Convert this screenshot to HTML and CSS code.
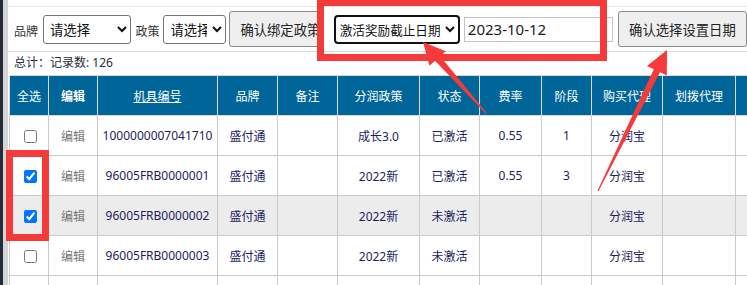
FILE: index.html
```html
<!DOCTYPE html>
<html lang="zh-CN">

<head>
  <meta charset="UTF-8">
  <title>机具管理</title>
  <link rel="stylesheet" href="styles.css">
</head>

<body>
  <div class="page">
    <div class="main">
      <!-- 工具栏 -->
      <div class="toolbar">
        <span class="lbl">品牌</span>
        <select class="sel sel-brand">
          <option>请选择</option>
        </select>
        <span class="lbl lbl-gap">政策</span>
        <select class="sel sel-policy">
          <option>请选择</option>
        </select>
        <button class="btn btn-bind">确认绑定政策</button>
        <select class="sel sel-date">
          <option>激活奖励截止日期</option>
        </select>
        <input class="date-input" type="text" value="2023-10-12">
        <button class="btn btn-date">确认选择设置日期</button>
      </div>

      <div class="summary">总计：记录数: 126</div>

      <!-- 列表 -->
      <div class="grid-wrap">
        <table class="grid">
          <colgroup>
            <col style="width:39px">
            <col style="width:49px">
            <col style="width:120px">
            <col style="width:60px">
            <col style="width:60px">
            <col style="width:82px">
            <col style="width:60px">
            <col style="width:62px">
            <col style="width:50px">
            <col style="width:71px">
            <col style="width:73px">
            <col style="width:90px">
          </colgroup>
          <thead>
            <tr>
              <th>全选</th>
              <th class="th-bold">编辑</th>
              <th><a href="#" class="th-link">机具编号</a></th>
              <th>品牌</th>
              <th>备注</th>
              <th>分润政策</th>
              <th>状态</th>
              <th>费率</th>
              <th>阶段</th>
              <th>购买代理</th>
              <th>划拨代理</th>
              <th></th>
            </tr>
          </thead>
          <tbody>
            <tr>
              <td><input type="checkbox" class="chk"></td>
              <td><a href="#" class="edit">编辑</a></td>
              <td>1000000007041710</td>
              <td>盛付通</td>
              <td></td>
              <td>成长3.0</td>
              <td>已激活</td>
              <td>0.55</td>
              <td>1</td>
              <td>分润宝</td>
              <td></td>
              <td></td>
            </tr>
            <tr>
              <td><input type="checkbox" class="chk" checked></td>
              <td><a href="#" class="edit">编辑</a></td>
              <td>96005FRB0000001</td>
              <td>盛付通</td>
              <td></td>
              <td>2022新</td>
              <td>已激活</td>
              <td>0.55</td>
              <td>3</td>
              <td>分润宝</td>
              <td></td>
              <td></td>
            </tr>
            <tr class="is-hover">
              <td><input type="checkbox" class="chk" checked></td>
              <td><a href="#" class="edit">编辑</a></td>
              <td>96005FRB0000002</td>
              <td>盛付通</td>
              <td></td>
              <td>2022新</td>
              <td>未激活</td>
              <td></td>
              <td></td>
              <td>分润宝</td>
              <td></td>
              <td></td>
            </tr>
            <tr>
              <td><input type="checkbox" class="chk"></td>
              <td><a href="#" class="edit">编辑</a></td>
              <td>96005FRB0000003</td>
              <td>盛付通</td>
              <td></td>
              <td>2022新</td>
              <td>未激活</td>
              <td></td>
              <td></td>
              <td>分润宝</td>
              <td></td>
              <td></td>
            </tr>
            <tr>
              <td></td>
              <td></td>
              <td></td>
              <td></td>
              <td></td>
              <td></td>
              <td></td>
              <td></td>
              <td></td>
              <td></td>
              <td></td>
              <td></td>
            </tr>
          </tbody>
        </table>
      </div>
    </div>
  </div>

  <!-- 标注 -->
  <div class="mark mark-date"></div>
  <div class="mark mark-check"></div>
  <svg class="arrows" width="747" height="285" viewBox="0 0 747 285">
    <polygon points="486.4,112.6 440.2,56.2 445.8,51.2 423,42 429.4,65.8 435,60.8 485.6,113.4" />
    <polygon points="598.5,191.3 660,72.2 666.8,75.5 667,50 647,65.9 653.8,69.2 597.5,190.7" />
  </svg>
</body>

</html>
```

FILE: styles.css
```css
html,
body {
  margin: 0;
  padding: 0;
  background: #fff;
  overflow: hidden;
}

body {
  width: 747px;
  height: 285px;
  position: relative;
  font-family: "Noto Sans", "Noto Sans CJK SC", sans-serif;
  font-size: 12px;
  color: #333;
}

.page {
  border-left: 3px solid #262b38;
  height: 285px;
  overflow: hidden;
}

.main {
  border-left: 5px solid #d5d5d5;
  height: 285px;
  padding-top: 6px;
  box-sizing: border-box;
  overflow: hidden;
}

/* 工具栏 */
.toolbar {
  display: flex;
  align-items: center;
  height: 44px;
  padding-left: 6px;
  border-top: 1px solid #e6e6e6;
  border-bottom: 1px solid #dcdcdc;
  white-space: nowrap;
  overflow: hidden;
}

.lbl {
  font-size: 12px;
  color: #333;
  margin-right: 5px;
  padding-top: 4px;
}

.lbl-gap {
  margin-left: 4px;
  margin-right: 4px;
}

.sel {
  height: 29px;
  font-family: "Noto Sans CJK SC", sans-serif;
  font-size: 13.33px;
  color: #111;
  background: #fff;
  border: 1px solid #767676;
  border-radius: 3px;
  padding: 0 2px;
  box-sizing: border-box;
}

.sel-brand {
  width: 89px;
}

.sel-policy {
  width: 63px;
}

.sel-date {
  width: 127px;
  margin-left: 12px;
  border: 2px solid #111;
  border-radius: 4px;
  padding: 0;
  font-size: 12.6px;
}

.btn {
  height: 36px;
  font-family: "Noto Sans CJK SC", sans-serif;
  font-size: 13.33px;
  color: #222;
  background: #efefef;
  border: 1px solid #8a8a8a;
  border-radius: 3px;
  box-sizing: border-box;
  white-space: nowrap;
}

.btn-bind {
  width: 93px;
  margin-left: 3px;
  padding: 0 0 0 10px;
  text-align: left;
  overflow: hidden;
}

.btn-date {
  width: 130px;
  margin-left: 5px;
  padding: 0 10px;
}

.date-input {
  width: 149px;
  height: 25px;
  margin-left: 4px;
  padding: 0 3px;
  box-sizing: border-box;
  border: 1px solid #c4c4c4;
  font-family: "Noto Sans", sans-serif;
  font-size: 15px;
  color: #1a1a1a;
}

.summary {
  height: 23px;
  line-height: 22px;
  padding-left: 6px;
  font-size: 12px;
  color: #2b2b40;
}

/* 列表 */
.grid-wrap {
  width: 739px;
  overflow: hidden;
}

.grid {
  margin-left: 1px;
  border-collapse: collapse;
  table-layout: fixed;
  width: 816px;
}

.grid th,
.grid td {
  height: 39px;
  padding: 0;
  text-align: center;
  border: 1px solid #cbcbcb;
  white-space: nowrap;
  overflow: hidden;
}

.grid thead tr {
  border-top: 1px solid #dedede;
}

.grid th {
  background: #006699;
  color: #fff;
  font-weight: normal;
  border-color: #d9d9d9;
}

.grid th.th-bold {
  font-weight: bold;
}

.th-link {
  color: #fff;
  text-decoration: underline;
}

.grid td {
  color: #1d1d5e;
  background: #fff;
}

.grid tr.is-hover td {
  background: #ececec;
}

.edit {
  color: #777;
  text-decoration: none;
}

.chk {
  width: 13px;
  height: 13px;
  margin: 0 0 0 2px;
  vertical-align: middle;
}

/* 标注 */
.mark {
  position: absolute;
  border: 7px solid #f53a3a;
  box-sizing: border-box;
}

.mark-date {
  left: 317px;
  top: -1px;
  width: 290px;
  height: 62px;
}

.mark-check {
  left: 6px;
  top: 150px;
  width: 43px;
  height: 91px;
}

.arrows {
  position: absolute;
  left: 0;
  top: 0;
  pointer-events: none;
}

.arrows polygon {
  fill: #f53a3a;
}
```
